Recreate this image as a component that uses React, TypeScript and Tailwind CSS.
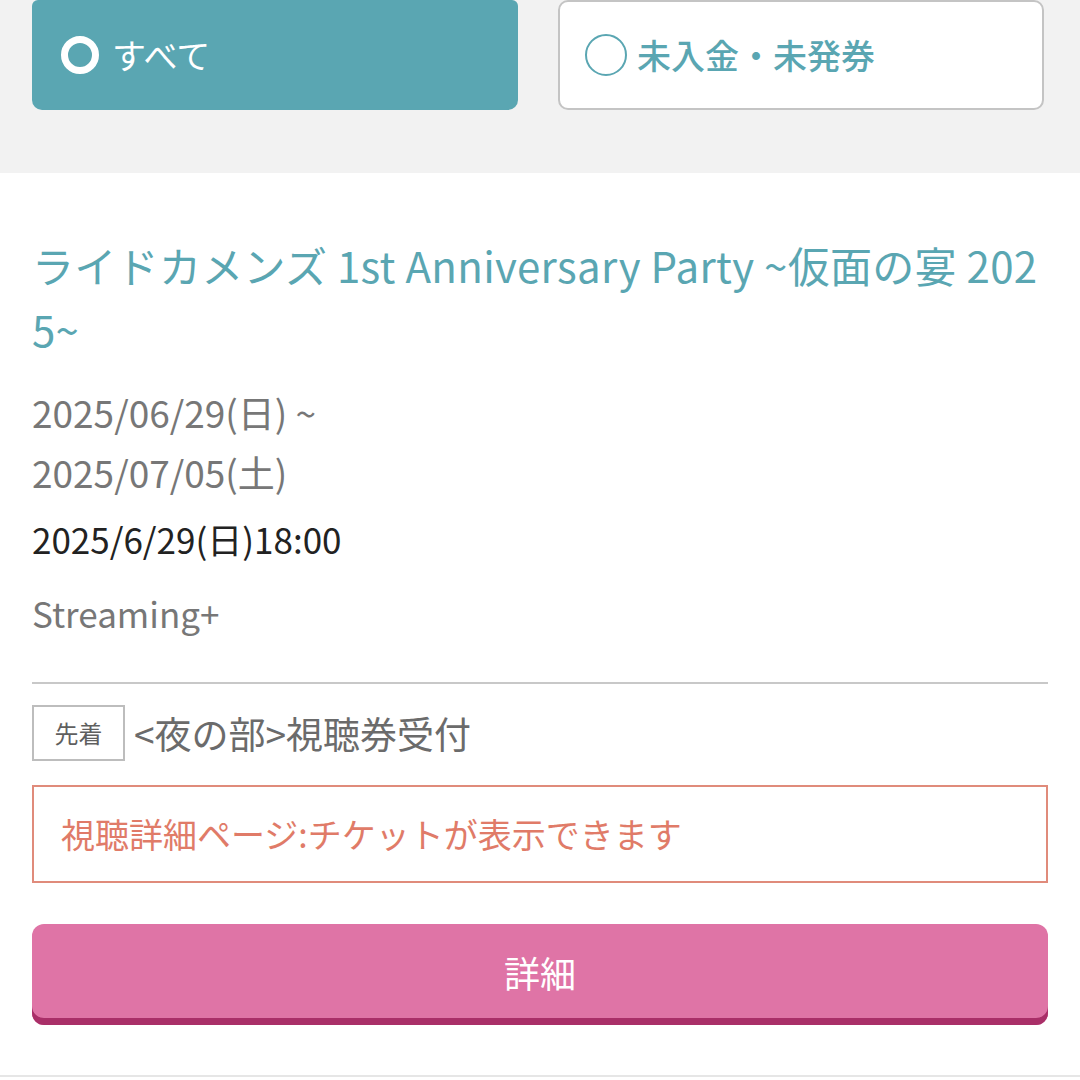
export default function App() {
  return (
    <div
      className="w-[1080px] h-[1080px] overflow-hidden bg-white"
      style={{ fontFamily: '"Noto Sans CJK JP", "Noto Sans", sans-serif' }}
    >
      {/* filter tabs */}
      <div className="bg-[#f2f2f2] h-[173px] px-8 flex gap-10">
        <button className="w-[486px] h-[110px] rounded-b-[10px] rounded-t-[6px] bg-[#5aa6b2] flex items-center pl-[29px] gap-[13px]">
          <span className="w-[38px] h-[38px] rounded-full border-[7px] border-white" />
          <span className="text-[34px] text-white leading-none">すべて</span>
        </button>
        <button className="w-[486px] h-[110px] rounded-[10px] bg-white border-2 border-[#c4c4c4] flex items-center pl-[25px] gap-[10px]">
          <span className="w-[42px] h-[42px] rounded-full border-2 border-[#5aa6b2]" />
          <span className="text-[34px] text-[#5aa6b2] font-medium leading-none">未入金・未発券</span>
        </button>
      </div>

      {/* event card */}
      <div className="px-8 pt-[60px] pb-[50px] border-b-2 border-[#e6e6e6]">
        <h2 className="text-[42px] leading-[64px] tracking-[0.3px] text-[#5aa6b2] break-all">
          ライドカメンズ 1st Anniversary Party ~仮面の宴 2025~
        </h2>
        <div className="mt-[21px] text-[37px] leading-[60px] text-[#777777]">
          <p>2025/06/29(日) ~</p>
          <p>2025/07/05(土)</p>
        </div>
        <p className="mt-[13px] text-[35px] leading-[48px] text-[#222222]">2025/6/29(日)18:00</p>
        <p className="mt-[26px] text-[35px] leading-[48px] text-[#777777]">Streaming+</p>

        <div className="mt-[45px] border-t-2 border-[#c8c8c8]" />

        <div className="mt-[21px] flex items-center gap-[9px]">
          <span className="w-[93px] h-[56px] border-2 border-[#bdbdbd] flex items-center justify-center text-[24px] text-[#5f5f5f]">
            先着
          </span>
          <span className="text-[37px] text-[#6b6b6b] leading-none">&lt;夜の部&gt;視聴券受付</span>
        </div>

        <div className="mt-[24px] h-[98px] border-2 border-[#e08b7b] flex items-center pl-[27px]">
          <span className="text-[34px] text-[#e07b68] leading-none">視聴詳細ページ:チケットが表示できます</span>
        </div>

        <button className="mt-[41px] w-full h-[101px] rounded-[12px] bg-[#df74a6] shadow-[inset_0_-7px_0_#a92f68] flex items-center justify-center pb-[6px]">
          <span className="text-[36px] text-white leading-none">詳細</span>
        </button>
      </div>
    </div>
  );
}
